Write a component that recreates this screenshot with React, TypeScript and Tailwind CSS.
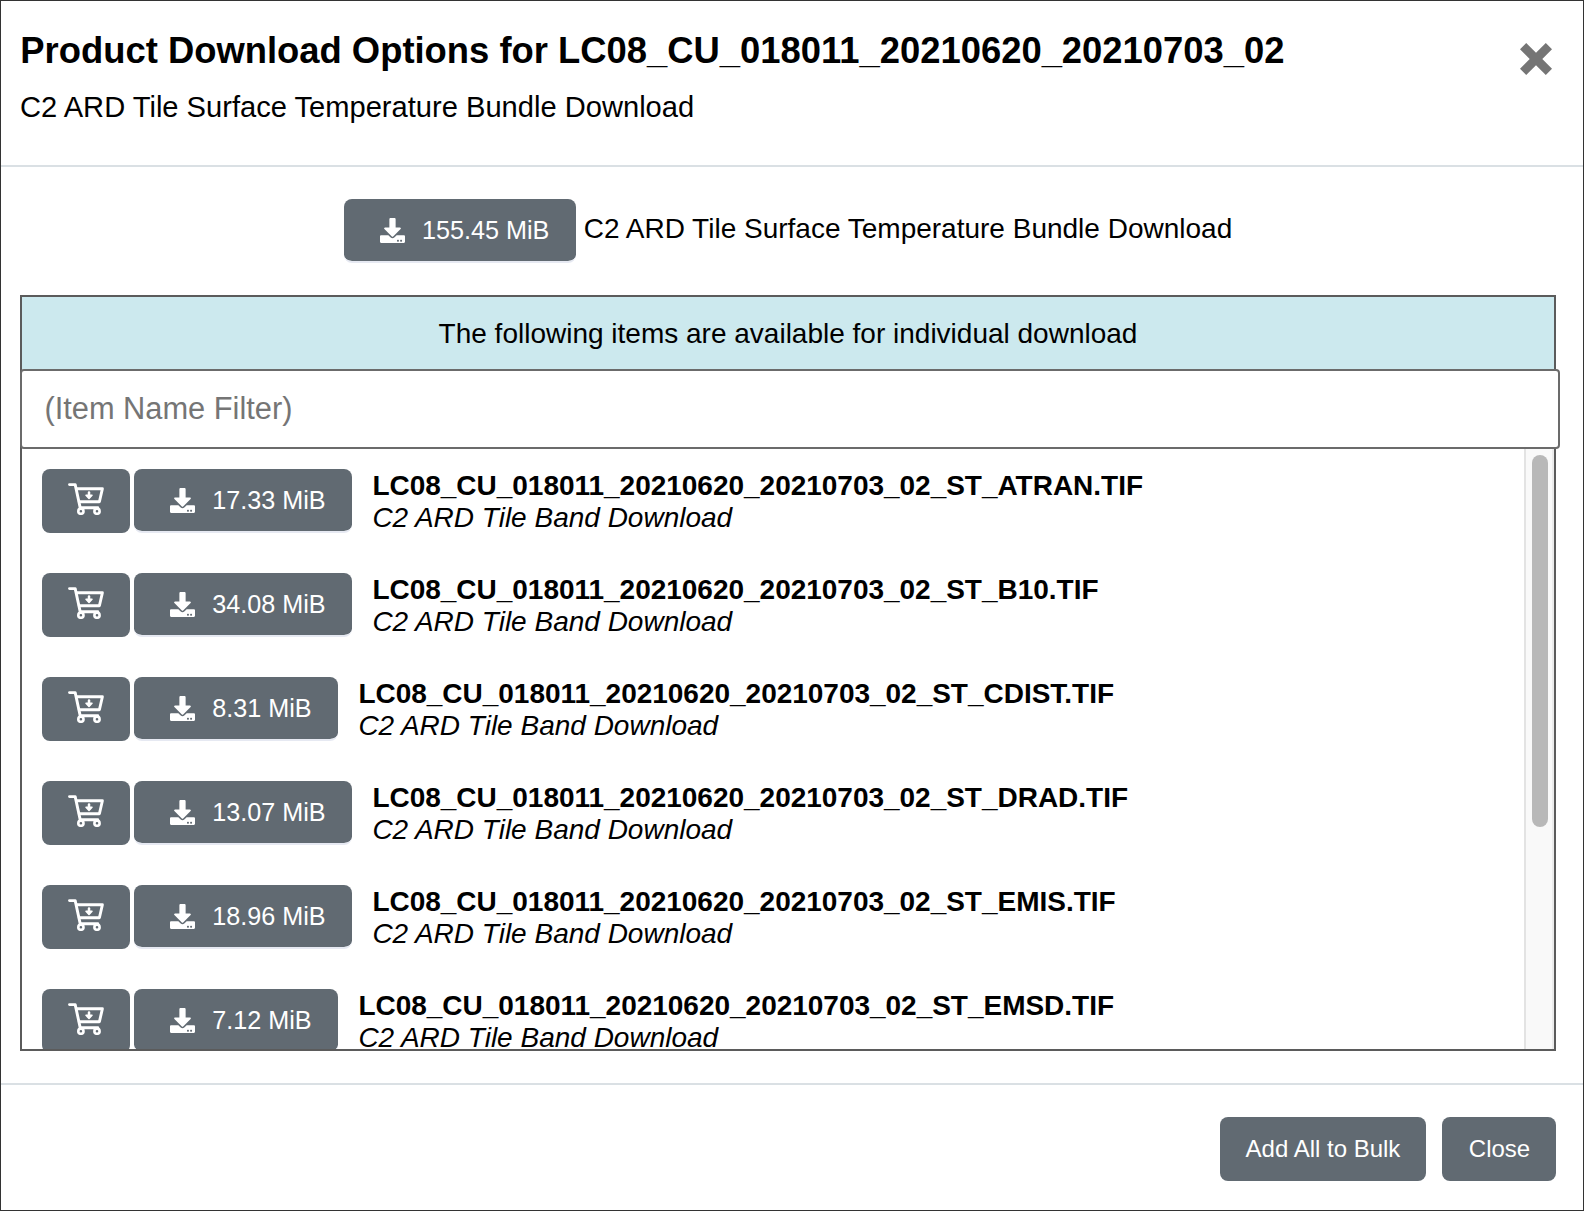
import React from "react";
import { FaDownload } from "react-icons/fa";

const items = [
  { size: "17.33 MiB", band: "ATRAN" },
  { size: "34.08 MiB", band: "B10" },
  { size: "8.31 MiB", band: "CDIST" },
  { size: "13.07 MiB", band: "DRAD" },
  { size: "18.96 MiB", band: "EMIS" },
  { size: "7.12 MiB", band: "EMSD" },
];

function CloseIcon() {
  return (
    <svg width="32" height="32" viewBox="0 0 32 32" fill="#757575">
      <path d="M6.2 0 16 9.7 25.8 0 32 6.2 22.3 16 32 25.8 25.8 32 16 22.3 6.2 32 0 25.8 9.7 16 0 6.2Z" />
    </svg>
  );
}

function CartIcon() {
  return (
    <svg width="36" height="32" viewBox="0 0 36 32" fill="none" stroke="#fff" strokeWidth="2.9" strokeLinecap="round" strokeLinejoin="round">
      <path d="M1.5 1.6h5.7l5.4 25" />
      <path d="M8.6 5.7h25.8l-3 13.1H11.2" />
      <path d="M12.6 24.7h17.2" />
      <circle cx="12.9" cy="28.2" r="2.6" fill="#616a72" strokeWidth="2.6" />
      <circle cx="29" cy="28.2" r="2.6" fill="#616a72" strokeWidth="2.6" />
      <path d="M21 9.4v4" strokeWidth="2.5" />
      <path d="M18 12.3h6L21 15.5Z" fill="#fff" strokeWidth="1.5" />
    </svg>
  );
}

function DownloadButton({ size }: { size: string }) {
  return (
    <button className="flex h-16 shrink-0 items-center rounded-lg border-b-2 border-[#e6e9f2] bg-[#616a72] bg-clip-padding pr-[26.8px] pl-9 text-[25.2px] whitespace-nowrap text-white">
      <FaDownload className="mr-[17.2px] size-[25px] shrink-0" />
      <span className="leading-8">{size}</span>
    </button>
  );
}

export default function App() {
  return (
    <div className="flex h-[1211px] w-[1584px] flex-col overflow-hidden border border-[#333] bg-white font-['Liberation_Sans',Arial,sans-serif] text-black">
      <header className="flex h-[166px] shrink-0 justify-between border-b-2 border-[#dae0e4] pr-[31px] pl-[19px]">
        <div>
          <h1 className="mt-[29px] pl-[0.3px] text-[36.4px] leading-[42px] font-bold whitespace-nowrap">
            Product Download Options for LC08_CU_018011_20210620_20210703_02
          </h1>
          <p className="mt-[18px] text-[29.12px] leading-[34px]">C2 ARD Tile Surface Temperature Bundle Download</p>
        </div>
        <button aria-label="Close dialog" className="mt-[42px] size-8">
          <CloseIcon />
        </button>
      </header>

      <main className="flex h-[918px] shrink-0 flex-col border-b-2 border-[#dae0e4] pr-[27px] pl-[19px]">
        <div className="mt-8 flex h-16 items-start justify-center">
          <DownloadButton size="155.45 MiB" />
          <span className="mt-3.5 ml-[7.5px] text-[28px] leading-8">C2 ARD Tile Surface Temperature Bundle Download</span>
        </div>

        <section className="mt-8 flex h-[756px] flex-col border-2 border-[#5b5b5b]">
          <div className="flex h-[72px] shrink-0 items-center justify-center bg-[#cce9ee] pt-0.5 text-[28px]">
            <span className="leading-8">The following items are available for individual download</span>
          </div>
          <input
            placeholder="(Item Name Filter)"
            className="-mr-1.5 -ml-0.5 block h-20 shrink-0 rounded border-2 border-[#6b6b6b] bg-white px-[22.4px] text-[30.8px] placeholder:text-[#757575]"
          />
          <div className="flex h-[600px] overflow-hidden">
            <ul className="flex flex-1 flex-col gap-10 overflow-hidden pt-5 pl-5">
              {items.map((item) => (
                <li key={item.band} className="flex h-16 shrink-0 items-start">
                  <button aria-label="Add to bulk" className="mr-1 flex h-16 w-[88px] items-start justify-center rounded-lg bg-[#616a72] pt-3.5">
                    <CartIcon />
                  </button>
                  <DownloadButton size={item.size} />
                  <div className="mt-px ml-5 text-[28px] leading-8 whitespace-nowrap">
                    <div className="font-bold tracking-[-0.02px]">LC08_CU_018011_20210620_20210703_02_ST_{item.band}.TIF</div>
                    <div className="italic">C2 ARD Tile Band Download</div>
                  </div>
                </li>
              ))}
            </ul>
            <div className="w-[30px] border-x-2 border-l-[#e3e3e3] border-r-[#ebebeb] bg-[#f9f9f9] px-1.5 pt-1.5">
              <div className="h-[372px] w-4 rounded-full bg-[#b8b8b8]" />
            </div>
          </div>
        </section>
      </main>

      <footer className="flex justify-end gap-4 pt-8 pr-[27px] text-[24px] text-white">
        <button className="h-16 w-[206px] rounded-lg bg-[#616a72]">Add All to Bulk</button>
        <button className="h-16 w-[114px] rounded-lg bg-[#616a72] pl-px">Close</button>
      </footer>
    </div>
  );
}
